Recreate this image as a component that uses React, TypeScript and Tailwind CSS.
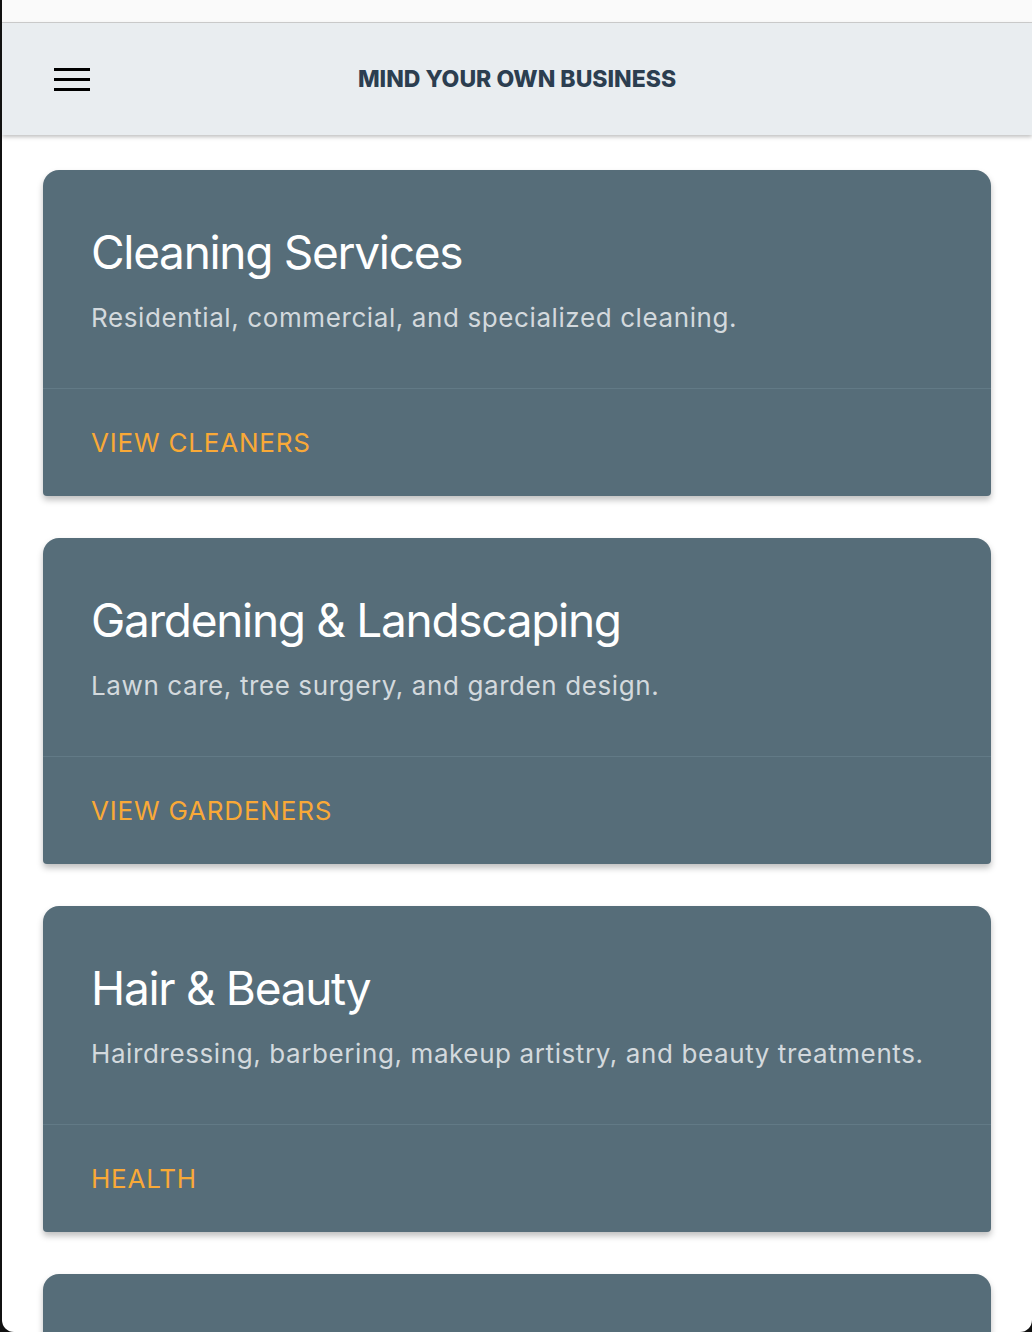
import React from "react";

const cards = [
  { title: "Cleaning Services", desc: "Residential, commercial, and specialized cleaning.", link: "VIEW CLEANERS" },
  { title: "Gardening & Landscaping", desc: "Lawn care, tree surgery, and garden design.", link: "VIEW GARDENERS" },
  { title: "Hair & Beauty", desc: "Hairdressing, barbering, makeup artistry, and beauty treatments.", link: "HEALTH" },
];

export default function App() {
  return (
    <div className="h-[1332px] w-[1032px] overflow-hidden bg-[#111] pl-[2px]" style={{ fontFamily: "Inter, 'Liberation Sans', sans-serif" }}>
      <div className="flex h-[1332px] flex-col overflow-hidden rounded-b-[12px] bg-white">
        <div className="h-[23px] shrink-0 border-b border-[#cfcfcf] bg-[#fafafa]" />
        <header className="relative z-10 flex h-[112px] shrink-0 items-center bg-[#e9edf0] shadow-[0_2px_4px_rgba(0,0,0,0.25)]">
          <div className="ml-[52px] flex w-[36px] flex-col gap-[7px]">
            <div className="h-[3px] bg-black" />
            <div className="h-[3px] bg-black" />
            <div className="h-[3px] bg-black" />
          </div>
          <div className="absolute left-0 right-0 top-0 flex h-full items-center justify-center">
            <span className="text-[23px] font-extrabold text-[#2c3e50]">MIND YOUR OWN BUSINESS</span>
          </div>
        </header>
        <main className="flex flex-col gap-[42px] px-[41px] pt-[35px]">
          {cards.map((c) => (
            <div key={c.title} className="shrink-0 rounded-t-[16px] rounded-b-[4px] bg-[#566d79] shadow-[0_4px_6px_rgba(0,0,0,0.25)]">
              <div className="h-[219px] border-b border-[#627a86] px-[48px] pt-[54px]">
                <h2 className="text-[46px] leading-[56px] font-normal tracking-[-1.3px] text-white">{c.title}</h2>
                <p className="mt-[22px] text-[26px] leading-[32px] tracking-[0.6px] text-[#d3d9dd]">{c.desc}</p>
              </div>
              <div className="flex h-[107px] items-center px-[48px]">
                <span className="text-[26px] leading-[32px] tracking-[0.8px] text-[#f9a937]">{c.link}</span>
              </div>
            </div>
          ))}
          <div className="h-[326px] shrink-0 rounded-t-[16px] rounded-b-[4px] bg-[#566d79] shadow-[0_4px_6px_rgba(0,0,0,0.25)]" />
        </main>
      </div>
    </div>
  );
}
